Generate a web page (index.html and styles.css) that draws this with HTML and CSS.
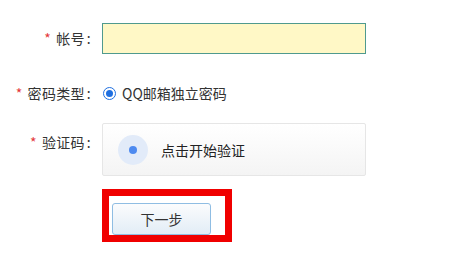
FILE: index.html
```html
<!DOCTYPE html>
<html lang="zh">
<head>
<meta charset="utf-8">
<link rel="stylesheet" href="styles.css">
</head>
<body>
<div class="form">
  <div class="row row-account">
    <div class="label"><span class="req">*</span>帐号<span class="colon">:</span></div>
    <div class="field"><div class="input"></div></div>
  </div>
  <div class="row row-type">
    <div class="label"><span class="req">*</span>密码类型<span class="colon">:</span></div>
    <div class="field radio-field"><span class="radio"><span class="dot"></span></span><span class="radio-text">QQ邮箱独立密码</span></div>
  </div>
  <div class="row row-captcha">
    <div class="label label-top"><span class="req">*</span>验证码<span class="colon">:</span></div>
    <div class="field">
      <div class="captcha">
        <span class="cap-circle"><span class="cap-dot"></span></span>
        <span class="cap-text">点击开始验证</span>
      </div>
    </div>
  </div>
  <div class="row row-submit">
    <div class="label"></div>
    <div class="field">
      <div class="highlight"><button class="next">下一步</button></div>
    </div>
  </div>
</div>
</body>
</html>
```

FILE: styles.css
```css
html, body {
  margin: 0;
  padding: 0;
  background: #fff;
}
body {
  font-family: "Noto Sans CJK SC", "Microsoft YaHei", sans-serif;
  font-size: 14px;
  color: #333;
}
.form {
  padding-top: 23px;
}
.row {
  display: grid;
  grid-template-columns: 92px 1fr;
  column-gap: 10px;
}
.label {
  text-align: right;
  line-height: 31px;
  color: #333;
  white-space: nowrap;
  letter-spacing: 0.3px;
}
.colon {
  margin-left: 2px;
  margin-right: 1px;
}
.req {
  color: #e4393c;
  margin-right: 5px;
}
.input {
  width: 262px;
  height: 29px;
  border: 1px solid #4f9a8e;
  background: #fff8c6;
}
.row-type {
  margin-top: 29px;
}
.row-type .label {
  line-height: 20px;
}
.radio-field {
  display: flex;
  align-items: center;
  height: 20px;
}
.radio {
  box-sizing: border-box;
  width: 13px;
  height: 13px;
  border: 1.5px solid #1f6fe0;
  border-radius: 50%;
  display: flex;
  align-items: center;
  justify-content: center;
  margin-left: 1px;
  margin-right: 6px;
}
.dot {
  width: 7px;
  height: 7px;
  border-radius: 50%;
  background: #1f6fe0;
}
.radio-text {
  line-height: 20px;
}
.row-captcha {
  margin-top: 20px;
}
.label-top {
  line-height: 20px;
  padding-top: 9px;
}
.captcha {
  box-sizing: border-box;
  width: 264px;
  height: 53px;
  border: 1px solid #e6e6e6;
  border-radius: 2px;
  background: linear-gradient(#ffffff, #f4f4f4);
  display: flex;
  align-items: center;
  padding-left: 15px;
}
.cap-circle {
  width: 30px;
  height: 30px;
  border-radius: 50%;
  background: #e2ebf9;
  display: flex;
  align-items: center;
  justify-content: center;
}
.cap-dot {
  width: 8px;
  height: 8px;
  border-radius: 50%;
  background: #4d8af0;
}
.cap-text {
  margin-left: 13px;
  color: #222;
}
.row-submit {
  margin-top: 13px;
}
.highlight {
  box-sizing: border-box;
  width: 130px;
  height: 53px;
  border: 7px solid #f00000;
  padding: 7px 0 0 3px;
}
.next {
  box-sizing: border-box;
  width: 99px;
  height: 32px;
  border: 1px solid #8fbde3;
  border-radius: 3px;
  background: linear-gradient(#fbfcfd, #e2edf6);
  font-family: "Noto Sans CJK SC", "Microsoft YaHei", sans-serif;
  font-size: 14px;
  color: #333;
  padding: 0;
  margin: 0;
  display: block;
}
```
